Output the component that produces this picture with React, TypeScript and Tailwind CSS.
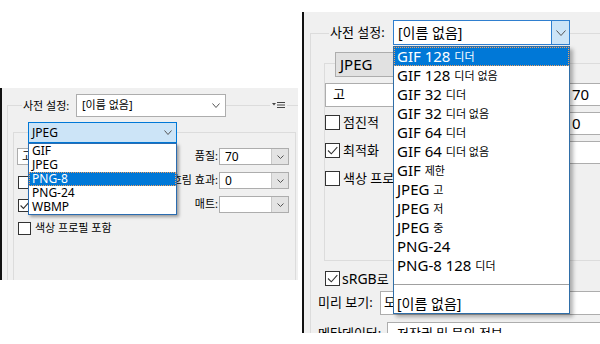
import React from "react";

const ff = "font-['Noto_Sans','Noto_Sans_CJK_KR',sans-serif]";

type Preset = { en: string; ko?: string };

const leftFormats = ["GIF", "JPEG", "PNG-8", "PNG-24", "WBMP"];

const presets: Preset[] = [
  { en: "GIF 128 ", ko: "디더" },
  { en: "GIF 128 ", ko: "디더 없음" },
  { en: "GIF 32 ", ko: "디더" },
  { en: "GIF 32 ", ko: "디더 없음" },
  { en: "GIF 64 ", ko: "디더" },
  { en: "GIF 64 ", ko: "디더 없음" },
  { en: "GIF ", ko: "제한" },
  { en: "JPEG ", ko: "고" },
  { en: "JPEG ", ko: "저" },
  { en: "JPEG ", ko: "중" },
  { en: "PNG-24" },
  { en: "PNG-8 128 ", ko: "디더" },
];

function Chevron({ w = 8, h = 5 }: { w?: number; h?: number }) {
  return (
    <svg width={w} height={h} viewBox={`0 0 ${w} ${h}`} className="shrink-0 text-[#555]">
      <path
        d={`M0.5 0.5 L${w / 2} ${h - 0.5} L${w - 0.5} 0.5`}
        fill="none"
        stroke="currentColor"
        strokeWidth="1"
      />
    </svg>
  );
}

function Checkbox({ size, checked = false }: { size: number; checked?: boolean }) {
  return (
    <svg width={size} height={size} viewBox={`0 0 ${size} ${size}`} className="shrink-0">
      <rect x="0.5" y="0.5" width={size - 1} height={size - 1} fill="#fff" stroke="#333" />
      {checked && (
        <path
          d={`M${size * 0.2} ${size * 0.5} L${size * 0.42} ${size * 0.72} L${size * 0.82} ${size * 0.28}`}
          fill="none"
          stroke="#333"
          strokeWidth="1.1"
        />
      )}
    </svg>
  );
}

function MenuIcon() {
  return (
    <svg width="13" height="8" viewBox="0 0 13 8">
      <path d="M0 2 L4 2 L2 4.5 Z" fill="#444" />
      <path d="M5 1.5 H13 M5 4 H13 M5 6.5 H13" stroke="#444" strokeWidth="1" />
    </svg>
  );
}

function SmallCombo({ label, value }: { label: string; value: string }) {
  return (
    <div className="flex h-[17px] items-center justify-end">
      <span className="mr-[1px] whitespace-nowrap text-[11px]">{label}</span>
      <div className="flex h-[17px] w-[70px] border border-[#adadad] bg-white">
        <span className="flex-1 pl-[5px] text-[12px] leading-[15px]">{value}</span>
        <div className="flex w-[17px] items-center justify-center border-l border-[#c8c8c8] bg-[#e3e3e3]">
          <Chevron w={7} h={4} />
        </div>
      </div>
    </div>
  );
}

function LeftPanel() {
  return (
    <div className="mt-[88px] h-[192px] w-[298px] shrink-0 overflow-hidden border-l-2 border-[#111] bg-[#f0f0f0] pl-[5px] pt-[17px]">
      <div className="h-[260px] w-[320px] border-l border-t border-[#dcdcdc]">
        <div className="-mt-[12px] flex h-[23px] items-center">
          <span className="ml-[14px] w-[54px] bg-[#f0f0f0] pl-[1px] text-[11px] leading-none">사전 설정:</span>
          <div className="flex h-[23px] w-[150px] items-center justify-between border border-[#adadad] bg-white pl-[5px] pr-[5px]">
            <span className="text-[11px]">[이름 없음]</span>
            <Chevron />
          </div>
          <div className="ml-[44px] flex bg-[#f0f0f0] px-[2px] pb-[2px]">
            <MenuIcon />
          </div>
        </div>

        <div className="ml-[5px] mt-[15px] h-[200px] w-[283px] border border-[#dcdcdc]">
          <div className="relative z-10 -mt-[11px] ml-[14px] h-[21px] w-[149px]">
            <div className="flex h-full items-center justify-between border border-[#0078d7] bg-[#cce4f7] pl-[3px] pr-[4px] text-[12px]">
              <span>JPEG</span>
              <Chevron />
            </div>
            <div className="absolute left-0 top-full w-full border border-[#2b6cb0] bg-white shadow-[2px_2px_3px_rgba(0,0,0,0.35)]">
              {leftFormats.map((f) => (
                <div
                  key={f}
                  className={
                    f === "PNG-8"
                      ? "flex h-[14px] items-center border border-dotted border-[#f0a060] bg-[#0078d7] pl-[2px] text-[12px] text-white"
                      : "flex h-[14px] items-center pl-[3px] text-[12px]"
                  }
                >
                  {f}
                </div>
              ))}
            </div>
          </div>

          <div className="mt-[5px] flex">
            <div className="flex w-[150px] flex-col">
              <div className="ml-[3px] flex h-[17px] w-[130px] items-center border border-[#adadad] bg-white pl-[4px] text-[11px]">
                고
              </div>
              <div className="ml-[4px] mt-[11px] flex flex-col gap-[10px] text-[11px]">
                <div className="flex h-[13px] items-center gap-[4px]">
                  <Checkbox size={13} />
                  <span>점진적</span>
                </div>
                <div className="flex h-[13px] items-center gap-[4px]">
                  <Checkbox size={13} checked />
                  <span>최적화</span>
                </div>
                <div className="flex h-[13px] items-center gap-[4px]">
                  <Checkbox size={13} />
                  <span>색상 프로필 포함</span>
                </div>
              </div>
            </div>
            <div className="ml-auto mr-[6px] flex flex-col gap-[7px]">
              <SmallCombo label="품질:" value="70" />
              <SmallCombo label="흐림 효과:" value="0" />
              <SmallCombo label="매트:" value="" />
            </div>
          </div>
        </div>
      </div>
    </div>
  );
}

function RightPanel() {
  return (
    <div className="ml-[4px] mt-[12px] h-[321px] w-[298px] shrink-0 overflow-hidden border-l-2 border-[#111] bg-[#f0f0f0] pl-[6px] pt-[21px]">
      <div className="h-[400px] w-[400px] border-l border-t border-[#dcdcdc]">
        <div className="-mt-[14px] flex h-[25px] items-center">
          <span className="ml-[18px] w-[64px] bg-[#f0f0f0] pl-[1px] text-[13px] leading-none">사전 설정:</span>
          <div className="relative z-10 h-[25px] w-[177px]">
            <div className="flex h-full border border-[#2f7fcf] bg-white">
              <span className="flex-1 pl-[4px] text-[14px] leading-[23px]">[이름 없음]</span>
              <div className="flex w-[18px] items-center justify-center border-l border-[#2f7fcf] bg-[#cce4f7]">
                <Chevron w={10} h={6} />
              </div>
            </div>
            <div className="absolute left-0 top-[26px] w-[177px] border border-[#2f6ea8] bg-white shadow-[3px_3px_4px_rgba(0,0,0,0.3)]">
              {presets.map((p, i) => (
                <div
                  key={i}
                  className={
                    i === 0
                      ? "flex h-[19px] items-center border border-dotted border-[#f0a060] bg-[#0078d7] pl-[2px] text-white"
                      : "flex h-[19px] items-center pl-[3px]"
                  }
                >
                  <span className="whitespace-pre text-[15px] leading-none">{p.en}</span>
                  {p.ko && <span className="text-[11px] leading-none">{p.ko}</span>}
                </div>
              ))}
              <div className="flex h-[19px] items-center">
                <div className="h-px w-full bg-[#a0a0a0]" />
              </div>
              <div className="flex h-[19px] items-center pl-[3px] text-[14px]">[이름 없음]</div>
            </div>
          </div>
        </div>

        <div className="ml-[13px] mt-[18px] h-[198px] w-[400px] border border-[#dcdcdc]">
          <div className="-mt-[12px] ml-[10px] flex h-[25px] w-[150px] items-center border border-[#adadad] bg-[#e1e1e1] pl-[4px] text-[15px]">
            JPEG
          </div>
          <div className="mt-[6px] flex">
            <div className="flex w-[200px] flex-col">
              <div className="flex h-[24px] w-[200px] items-center border border-[#adadad] bg-white pl-[7px] text-[13px]">
                고
              </div>
              <div className="mt-[8px] flex flex-col gap-[13px] text-[13px]">
                <div className="flex h-[15px] items-center gap-[3px]">
                  <Checkbox size={15} />
                  <span>점진적</span>
                </div>
                <div className="flex h-[15px] items-center gap-[3px]">
                  <Checkbox size={15} checked />
                  <span>최적화</span>
                </div>
                <div className="flex h-[15px] items-center gap-[3px]">
                  <Checkbox size={15} />
                  <span>색상 프로필 포함</span>
                </div>
              </div>
            </div>
            <div className="flex flex-col gap-[6px]">
              {[
                ["품질:", "70"],
                ["흐림 효과:", "0"],
                ["매트:", ""],
              ].map(([l, v]) => (
                <div key={l} className="flex h-[23px] items-center">
                  <span className="mr-[2px] w-[40px] whitespace-nowrap text-right text-[13px]">{l}</span>
                  <div className="flex h-[23px] w-[80px] items-center border border-[#adadad] bg-white pl-[4px] text-[15px]">
                    {v}
                  </div>
                </div>
              ))}
            </div>
          </div>
        </div>

        <div className="ml-[14px] mt-[10px] flex h-[15px] items-center gap-[2px]">
          <Checkbox size={15} checked />
          <span className="text-[14px]">
            sRGB<span className="text-[13px]">로</span>
          </span>
        </div>
        <div className="mt-[5px] flex h-[24px] items-center">
          <span className="ml-[7px] w-[62px] whitespace-nowrap text-[13px]">미리 보기:</span>
          <div className="flex h-[24px] w-[230px] items-center border border-[#adadad] bg-white pl-[3px] text-[13px]">
            모니터 색상
          </div>
        </div>
        <div className="mt-[7px] flex h-[24px] items-center">
          <span className="ml-[7px] w-[69px] whitespace-nowrap text-[13px]">메타데이터:</span>
          <div className="flex h-[24px] w-[230px] items-center border border-[#adadad] bg-white pl-[9px] text-[13px]">
            저작권 및 문의 정보
          </div>
        </div>
      </div>
    </div>
  );
}

export default function App() {
  return (
    <div className={`flex h-[344px] w-[600px] overflow-hidden bg-white text-black ${ff}`}>
      <LeftPanel />
      <RightPanel />
    </div>
  );
}
